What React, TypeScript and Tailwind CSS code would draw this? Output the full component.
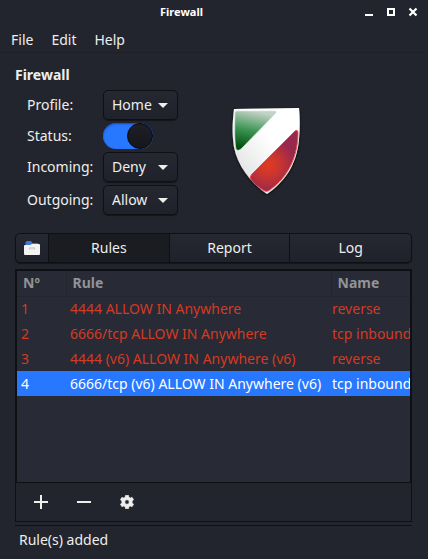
import { useState } from "react";

const rules = [
  { id: 1, rule: "4444 ALLOW IN Anywhere", name: "reverse" },
  { id: 2, rule: "6666/tcp ALLOW IN Anywhere", name: "tcp inbound" },
  { id: 3, rule: "4444 (v6) ALLOW IN Anywhere (v6)", name: "reverse" },
  { id: 4, rule: "6666/tcp (v6) ALLOW IN Anywhere (v6)", name: "tcp inbound" },
];

function Field({ id, label, options }: { id: string; label: string; options: string[] }) {
  return (
    <>
      <label htmlFor={id}>{label}</label>
      <div className="relative h-[30px] w-[75px]">
        <select
          id={id}
          className="h-full w-full appearance-none rounded-[5px] border border-[#0e1014] bg-linear-to-b from-[#252831] to-[#20222b] pl-[8px] leading-5 text-[#eeeeec] shadow-[0_1px_1px_#14161b]"
        >
          {options.map((option) => (
            <option key={option}>{option}</option>
          ))}
        </select>
        <svg className="pointer-events-none absolute top-[13px] right-[10px] h-[5px] w-[10px]" viewBox="0 0 10 5" aria-hidden="true">
          <path d="M0 0h10L5 5z" fill="#eeeeec" />
        </svg>
      </div>
    </>
  );
}

function Shield() {
  return (
    <svg className="h-[92px] w-[76px]" viewBox="0 0 76 92" role="img" aria-label="Firewall shield">
      <defs>
        <linearGradient id="white" x1="0" y1="1" x2="1" y2="0">
          <stop offset="0" stopColor="#d8d8d8" />
          <stop offset="0.6" stopColor="#ffffff" />
        </linearGradient>
        <linearGradient id="green" gradientUnits="userSpaceOnUse" x1="12" y1="44" x2="20" y2="6">
          <stop offset="0" stopColor="#004d0c" />
          <stop offset="0.5" stopColor="#3c9554" />
          <stop offset="1" stopColor="#c3d2c6" />
        </linearGradient>
        <radialGradient id="red" gradientUnits="userSpaceOnUse" cx="40" cy="61" r="32">
          <stop offset="0" stopColor="#e23b20" />
          <stop offset="0.35" stopColor="#cb352f" />
          <stop offset="0.85" stopColor="#98284d" />
        </radialGradient>
        <filter id="shade" x="-20%" y="-20%" width="140%" height="140%">
          <feDropShadow dx="0" dy="1" stdDeviation="1.5" floodColor="#08090b" floodOpacity="0.8" />
        </filter>
      </defs>
      <path
        d="M6 5 71 4C72 14 72 24 71 35C69 59 58 77 39 90C19 76 6 56 5 35C4 24 5 14 6 5Z"
        fill="url(#white)"
        filter="url(#shade)"
      />
      <path d="M9 7H46Q50 7 47 10L14 44Q10 48 8 45C6 33 7 19 7 9Q7 7 9 7Z" fill="url(#green)" stroke="#dce8df" strokeWidth="0.6" />
      <path
        d="M67 27Q70 25 70 29C70 52 60 73 43 85Q39 89 35 86Q28 82 23 76Q21 73 24 70Z"
        fill="url(#red)"
        stroke="#e8504a"
        strokeWidth="1"
      />
    </svg>
  );
}

export default function App() {
  const [enabled, setEnabled] = useState(true);
  const [tab, setTab] = useState("Rules");
  const [selected, setSelected] = useState(4);

  return (
    <div className="flex min-h-screen flex-col bg-[#23252e] font-['Noto_Sans',sans-serif] text-[14px] leading-5 text-[#eeeeec]">
      <header className="flex h-6 shrink-0 items-center pr-[9px]">
        <h1 className="grow text-center text-[11px] leading-4 font-bold text-white">Firewall</h1>
        <div className="flex gap-[10px]">
          <button aria-label="Minimize" className="size-3">
            <svg viewBox="0 0 12 12" shapeRendering="crispEdges"><path d="M2 8h8v2H2z" fill="#fff" /></svg>
          </button>
          <button aria-label="Maximize" className="size-3">
            <svg viewBox="0 0 12 12" shapeRendering="crispEdges"><path d="M3 3h6v6H3z" fill="none" stroke="#fff" strokeWidth="2" /></svg>
          </button>
          <button aria-label="Close" className="size-3">
            <svg viewBox="0 0 12 12"><path d="m2.500 2.500 7 7m0-7-7 7" stroke="#fff" strokeWidth="2.200" /></svg>
          </button>
        </div>
      </header>

      <nav className="flex h-[29px] shrink-0 items-center gap-[18px] border-b border-[#1f2129] px-[11px] pt-1">
        <button>File</button>
        <button>Edit</button>
        <button>Help</button>
      </nav>

      <main className="flex grow flex-col px-4 pl-[15px]">
        <h2 className="mt-3 font-bold">Firewall</h2>
        <section className="mt-[5px] flex">
          <div className="grid grid-cols-[76px_75px] items-center gap-y-[3px] pl-3">
            <Field id="profile" label="Profile:" options={["Home", "Office", "Public"]} />
            <label htmlFor="status">Status:</label>
            <div className="relative h-[26px] w-[50px]">
              <input
                id="status"
                type="checkbox"
                role="switch"
                checked={enabled}
                onChange={() => setEnabled(!enabled)}
                className="peer block h-full w-full appearance-none rounded-full bg-[#191b21] shadow-[inset_0_1px_2px_#174aa6] checked:bg-[#2777ff]"
              />
              <span className="pointer-events-none absolute top-0 left-0 size-[26px] rounded-full border border-[#050608] bg-linear-to-b from-[#1d1f25] to-[#15171b] peer-checked:left-6" />
            </div>
            <Field id="incoming" label="Incoming:" options={["Deny", "Reject", "Allow"]} />
            <Field id="outgoing" label="Outgoing:" options={["Allow", "Reject", "Deny"]} />
          </div>
          <div className="flex grow justify-center pt-[14px] pr-[58px]">
            <Shield />
          </div>
        </section>

        <div className="mt-[18px] flex h-[30px] shrink-0 divide-x divide-[#0e1014] overflow-hidden rounded-[5px] border border-[#0e1014] bg-linear-to-b from-[#252831] to-[#20222b] shadow-[0_1px_1px_#14161b]">
          <button aria-label="Profiles" className="flex w-[33px] items-center justify-center">
            <svg className="h-4 w-4" viewBox="0 0 16 16">
              <path d="M1.500 2.500Q1.500 1 3 1h4l1.500 2H13q1.500 0 1.500 1.500V8h-13z" fill="#3c78d8" />
              <path d="M0 6q0-1 1-1h5l2-1h7q1 0 1 1v9q0 1-1 1H1q-1 0-1-1z" fill="#f3f3f3" />
              <path d="M5 9.500v-2h6v2" fill="#c4c4c4" />
              <path d="M6 9h4" stroke="#f3f3f3" />
            </svg>
          </button>
          <div role="tablist" className="grid grow grid-cols-3 divide-x divide-[#0e1014]">
            {["Rules", "Report", "Log"].map((item) => (
              <button
                key={item}
                role="tab"
                aria-selected={tab === item}
                onClick={() => setTab(item)}
                className="aria-selected:bg-[#1a1c22]"
              >
                {item}
              </button>
            ))}
          </div>
        </div>

        <section className="mt-[6px] flex grow flex-col border border-[#0e1014]">
          <div className="grow overflow-hidden border border-[#0e1014] bg-[#282a36]">
            <table className="w-full table-fixed border-collapse text-left whitespace-nowrap">
              <colgroup>
                <col className="w-[49px]" />
                <col />
                <col className="w-[79px]" />
              </colgroup>
              <thead>
                <tr className="h-[25px] border-b border-[#23252f] text-[#929397]">
                  <th className="border-r border-[#23252f] pl-[6px] font-bold">Nº</th>
                  <th className="border-r border-[#23252f] pl-[6px] font-bold">Rule</th>
                  <th className="pl-[6px] font-bold">Name</th>
                </tr>
              </thead>
              <tbody>
                {rules.map((row) => (
                  <tr
                    key={row.id}
                    aria-selected={selected === row.id}
                    onClick={() => setSelected(row.id)}
                    className="h-[25px] text-[#d43b22] aria-selected:bg-[#2777ff] aria-selected:text-white"
                  >
                    <td className="pl-1">{row.id}</td>
                    <td className="pl-1">{row.rule}</td>
                    <td className="pl-px">{row.name}</td>
                  </tr>
                ))}
              </tbody>
            </table>
          </div>
          <div className="flex h-[38px] shrink-0 items-center gap-[29px] pl-[18px]">
            <button aria-label="Add rule" className="size-[14px]">
              <svg viewBox="0 0 14 14"><path d="M0 7h14M7 0v14" stroke="#eeeeec" strokeWidth="2" /></svg>
            </button>
            <button aria-label="Remove rule" className="size-[14px]">
              <svg viewBox="0 0 14 14"><path d="M0 7h14" stroke="#eeeeec" strokeWidth="2" /></svg>
            </button>
            <button aria-label="Rule settings" className="size-[14px]">
              <svg viewBox="0 0 14 14">
                <path
                  fill="#eeeeec"
                  fillRule="evenodd"
                  stroke="#eeeeec"
                  strokeLinejoin="round"
                  strokeWidth="0.600"
                  d="M5.500.3h3l.4 1.900 1.300.8 1.900-.7 1.500 2.500-1.500 1.400v1.600l1.500 1.400-1.500 2.500-1.900-.7-1.300.8-.4 1.900h-3l-.4-1.900-1.300-.8-1.900.7L.4 9.200l1.500-1.400V6.200L.4 4.800l1.500-2.500 1.900.7 1.300-.8zM7 4.800a2.200 2.200 0 1 0 0 4.400 2.200 2.200 0 0 0 0-4.400z"
                />
              </svg>
            </button>
          </div>
        </section>
        <footer className="mt-[3px] h-[34px] shrink-0 border-t border-[#0e1014] px-1 pt-1" role="status">
          Rule(s) added
        </footer>
      </main>
    </div>
  );
}
